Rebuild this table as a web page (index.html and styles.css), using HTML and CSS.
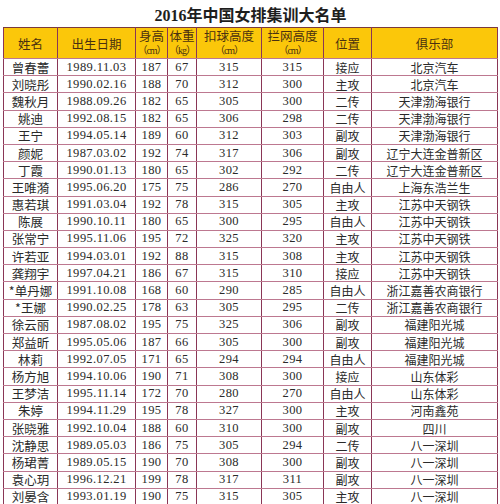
FILE: index.html
```html
<!DOCTYPE html>
<html lang="zh-CN">
<head>
<meta charset="utf-8">
<title>2016年中国女排集训大名单</title>
<link rel="stylesheet" href="styles.css">
</head>
<body>
<div class="page">
  <h1 class="title">2016年中国女排集训大名单</h1>
  <table class="roster">
    <colgroup>
      <col class="c-name"><col class="c-date"><col class="c-h"><col class="c-w"><col class="c-spike"><col class="c-block"><col class="c-pos"><col class="c-club">
    </colgroup>
    <thead>
      <tr>
        <th>姓名</th>
        <th>出生日期</th>
        <th>身高<br><span class="unit">（cm）</span></th>
        <th>体重<br><span class="unit">（kg）</span></th>
        <th>扣球高度<br><span class="unit">（cm）</span></th>
        <th>拦网高度<br><span class="unit">（cm）</span></th>
        <th>位置</th>
        <th>俱乐部</th>
      </tr>
    </thead>
    <tbody>
      <tr><td class="name">曾春蕾</td><td class="num">1989.11.03</td><td class="num">187</td><td class="num">67</td><td class="num">315</td><td class="num">315</td><td>接应</td><td>北京汽车</td></tr>
      <tr><td class="name">刘晓彤</td><td class="num">1990.02.16</td><td class="num">188</td><td class="num">70</td><td class="num">312</td><td class="num">300</td><td>主攻</td><td>北京汽车</td></tr>
      <tr><td class="name">魏秋月</td><td class="num">1988.09.26</td><td class="num">182</td><td class="num">65</td><td class="num">305</td><td class="num">300</td><td>二传</td><td>天津渤海银行</td></tr>
      <tr><td class="name">姚迪</td><td class="num">1992.08.15</td><td class="num">182</td><td class="num">65</td><td class="num">306</td><td class="num">298</td><td>二传</td><td>天津渤海银行</td></tr>
      <tr><td class="name">王宁</td><td class="num">1994.05.14</td><td class="num">189</td><td class="num">60</td><td class="num">312</td><td class="num">303</td><td>副攻</td><td>天津渤海银行</td></tr>
      <tr><td class="name">颜妮</td><td class="num">1987.03.02</td><td class="num">192</td><td class="num">74</td><td class="num">317</td><td class="num">306</td><td>副攻</td><td>辽宁大连金普新区</td></tr>
      <tr><td class="name">丁霞</td><td class="num">1990.01.13</td><td class="num">180</td><td class="num">65</td><td class="num">302</td><td class="num">292</td><td>二传</td><td>辽宁大连金普新区</td></tr>
      <tr><td class="name">王唯漪</td><td class="num">1995.06.20</td><td class="num">175</td><td class="num">75</td><td class="num">286</td><td class="num">270</td><td>自由人</td><td>上海东浩兰生</td></tr>
      <tr><td class="name">惠若琪</td><td class="num">1991.03.04</td><td class="num">192</td><td class="num">78</td><td class="num">315</td><td class="num">305</td><td>主攻</td><td>江苏中天钢铁</td></tr>
      <tr><td class="name">陈展</td><td class="num">1990.10.11</td><td class="num">180</td><td class="num">65</td><td class="num">300</td><td class="num">295</td><td>自由人</td><td>江苏中天钢铁</td></tr>
      <tr><td class="name">张常宁</td><td class="num">1995.11.06</td><td class="num">195</td><td class="num">72</td><td class="num">325</td><td class="num">320</td><td>主攻</td><td>江苏中天钢铁</td></tr>
      <tr><td class="name">许若亚</td><td class="num">1994.03.01</td><td class="num">192</td><td class="num">88</td><td class="num">315</td><td class="num">308</td><td>主攻</td><td>江苏中天钢铁</td></tr>
      <tr><td class="name">龚翔宇</td><td class="num">1997.04.21</td><td class="num">186</td><td class="num">67</td><td class="num">315</td><td class="num">310</td><td>接应</td><td>江苏中天钢铁</td></tr>
      <tr><td class="name">*单丹娜</td><td class="num">1991.10.08</td><td class="num">168</td><td class="num">60</td><td class="num">290</td><td class="num">285</td><td>自由人</td><td>浙江嘉善农商银行</td></tr>
      <tr><td class="name">*王娜</td><td class="num">1990.02.25</td><td class="num">178</td><td class="num">63</td><td class="num">305</td><td class="num">295</td><td>二传</td><td>浙江嘉善农商银行</td></tr>
      <tr><td class="name">徐云丽</td><td class="num">1987.08.02</td><td class="num">195</td><td class="num">75</td><td class="num">325</td><td class="num">306</td><td>副攻</td><td>福建阳光城</td></tr>
      <tr><td class="name">郑益昕</td><td class="num">1995.05.06</td><td class="num">187</td><td class="num">66</td><td class="num">305</td><td class="num">300</td><td>副攻</td><td>福建阳光城</td></tr>
      <tr><td class="name">林莉</td><td class="num">1992.07.05</td><td class="num">171</td><td class="num">65</td><td class="num">294</td><td class="num">294</td><td>自由人</td><td>福建阳光城</td></tr>
      <tr><td class="name">杨方旭</td><td class="num">1994.10.06</td><td class="num">190</td><td class="num">71</td><td class="num">308</td><td class="num">300</td><td>接应</td><td>山东体彩</td></tr>
      <tr><td class="name">王梦洁</td><td class="num">1995.11.14</td><td class="num">172</td><td class="num">70</td><td class="num">280</td><td class="num">270</td><td>自由人</td><td>山东体彩</td></tr>
      <tr><td class="name">朱婷</td><td class="num">1994.11.29</td><td class="num">195</td><td class="num">78</td><td class="num">327</td><td class="num">300</td><td>主攻</td><td>河南鑫苑</td></tr>
      <tr><td class="name">张晓雅</td><td class="num">1992.10.04</td><td class="num">188</td><td class="num">60</td><td class="num">310</td><td class="num">300</td><td>副攻</td><td>四川</td></tr>
      <tr><td class="name">沈静思</td><td class="num">1989.05.03</td><td class="num">186</td><td class="num">75</td><td class="num">305</td><td class="num">294</td><td>二传</td><td>八一深圳</td></tr>
      <tr><td class="name">杨珺菁</td><td class="num">1989.05.15</td><td class="num">190</td><td class="num">70</td><td class="num">308</td><td class="num">300</td><td>副攻</td><td>八一深圳</td></tr>
      <tr><td class="name">袁心玥</td><td class="num">1996.12.21</td><td class="num">199</td><td class="num">78</td><td class="num">317</td><td class="num">311</td><td>副攻</td><td>八一深圳</td></tr>
      <tr><td class="name">刘晏含</td><td class="num">1993.01.19</td><td class="num">190</td><td class="num">75</td><td class="num">315</td><td class="num">305</td><td>主攻</td><td>八一深圳</td></tr>
    </tbody>
  </table>
</div>
</body>
</html>
```

FILE: styles.css
```css
html, body {
  margin: 0;
  padding: 0;
  background: #ffffff;
}

.page {
  width: 500px;
  padding: 0 3px;
  box-sizing: border-box;
  font-family: "Liberation Serif", "Noto Sans CJK SC", serif;
  color: #222;
}

.title {
  margin: 0;
  height: 27px;
  line-height: 31px;
  font-size: 16px;
  font-weight: bold;
  text-align: center;
  color: #1e1e1e;
  padding-left: 1px;
}

.roster {
  width: 494px;
  table-layout: fixed;
  border-collapse: collapse;
}

.c-name { width: 54px; }
.c-date { width: 78px; }
.c-h { width: 32px; }
.c-w { width: 29px; }
.c-spike { width: 65px; }
.c-block { width: 62px; }
.c-pos { width: 48px; }
.c-club { width: 126px; }

.roster th,
.roster td {
  padding: 0;
  text-align: center;
  white-space: nowrap;
  overflow: hidden;
  border-left: 1px solid #8a3656;
  border-right: 1px solid #8a3656;
  border-top: 1px solid #bd7890;
  border-bottom: 1px solid #bd7890;
}

.roster thead th {
  height: 30px;
  background: #fbc70a;
  color: #4a3010;
  font-family: "Noto Sans CJK SC", sans-serif;
  font-weight: normal;
  font-size: 12.5px;
  line-height: 13px;
  border-top: 1px solid #7a3a3a;
}

.roster .unit {
  font-family: "Liberation Serif", "Noto Sans CJK SC", serif;
  font-size: 10px;
  letter-spacing: -1px;
}

.roster tbody tr {
  height: 17.2px;
}

.roster td {
  font-family: "Noto Sans CJK SC", sans-serif;
  font-size: 12px;
  line-height: 15px;
  color: #2a2a2a;
}

.roster td.name {
  font-size: 12.5px;
}

.roster td.num {
  font-family: "Liberation Serif", serif;
  font-size: 12.5px;
  letter-spacing: 0.4px;
}
```
